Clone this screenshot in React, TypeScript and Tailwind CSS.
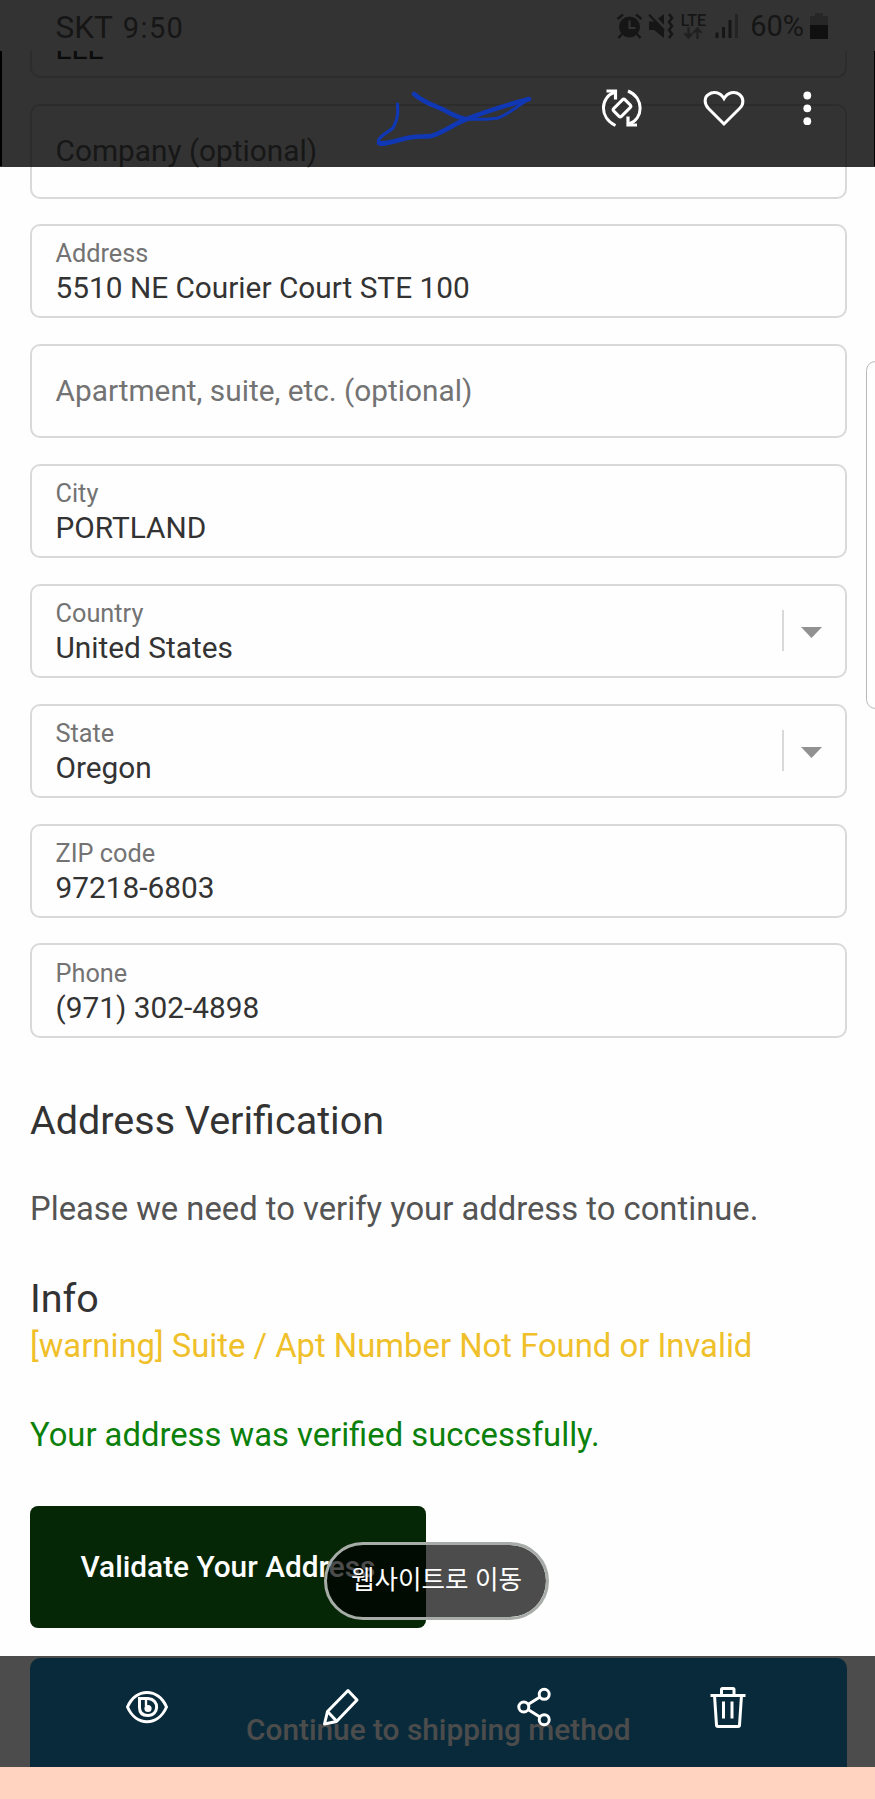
import type { ReactNode } from 'react';

type FieldProps = {
  label?: string;
  value?: string;
  placeholder?: string;
  select?: boolean;
};

const fields: FieldProps[] = [
  { placeholder: 'Company (optional)' },
  { label: 'Address', value: '5510 NE Courier Court STE 100' },
  { placeholder: 'Apartment, suite, etc. (optional)' },
  { label: 'City', value: 'PORTLAND' },
  { label: 'Country', value: 'United States', select: true },
  { label: 'State', value: 'Oregon', select: true },
  { label: 'ZIP code', value: '97218-6803' },
  { label: 'Phone', value: '(971) 302-4898' },
];

function Field({ label, value, placeholder, select }: FieldProps) {
  return (
    <div className="flex h-[94.4px] shrink-0 items-center rounded-[10px] border-2 border-[#d9d9d9] pl-[23.5px] pr-[23px]">
      <div className="flex-1">
        {placeholder ? (
          <div className="text-[29.8px] leading-[34px] text-[#737373]">{placeholder}</div>
        ) : (
          <>
            <div className="pt-[2.4px] text-[25.3px] leading-[32px] text-[#737373]">{label}</div>
            <div className="text-[29.8px] leading-[36px] text-[#333333]">{value}</div>
          </>
        )}
      </div>
      {select && (
        <div className="flex items-center gap-[17px]">
          <span className="h-[41px] w-[2px] bg-[#d9d9d9]" />
          <svg className="mt-[3px]" width="21" height="11" viewBox="0 0 21 11">
            <path d="M0 0h21L10.5 11z" fill="#919191" />
          </svg>
        </div>
      )}
    </div>
  );
}

function StatusBar() {
  return (
    <div className="flex h-[51px] shrink-0 items-center justify-between bg-white pl-[55.5px] pr-[47px] text-[#6e6e6e]">
      <div className="flex items-center pt-1 text-[31.5px] leading-[40px]">
        <span>SKT</span>
        <span className="ml-[10px] text-[29px] tracking-[1.4px]">9:50</span>
      </div>
      <div className="flex items-center pt-px">
        <svg width="27" height="26" viewBox="0 0 27 26" fill="none" stroke="currentColor" strokeWidth="2.6">
          <circle cx="13.5" cy="14" r="10.5" fill="currentColor" stroke="none" />
          <path d="M1.5 6 7 1.5M20 1.5 25.5 6M6 21l-3.5 4M21 21l3.5 4" />
          <path d="M13.5 7.5v7.5h6" stroke="#fff" strokeWidth="2" />
        </svg>
        <svg className="ml-[5px]" width="26" height="26" viewBox="0 0 26 26" fill="none" stroke="currentColor" strokeWidth="2.6">
          <path d="M1 8.5h5L16 1v24L6 17H1z" fill="currentColor" stroke="none" />
          <path d="M3 0l15 16" stroke="#fff" strokeWidth="2.6" />
          <path d="M1 1.5 16 18" strokeWidth="2.2" />
          <path d="M21 1l3 4-3 4 3 4-3 4 3 4-3 4" />
        </svg>
        <div className="ml-[7px] flex flex-col items-center">
          <span className="text-[16px] font-medium leading-[13px]">LTE</span>
          <svg width="20" height="12" viewBox="0 0 20 12" fill="none" stroke="#a0a0a0" strokeWidth="2.4">
            <path d="M5.5 0v10M1.5 6l4 4.5 4-4.5M14.5 12V2M10.5 6l4-4.5 4 4.5" />
          </svg>
        </div>
        <svg className="ml-[9px]" width="24" height="24" viewBox="0 0 24 24" stroke="currentColor" strokeWidth="3">
          <path d="M2 18.5V24M8.5 13v11M15 6v18" />
          <path d="M21.5 0v24" stroke="#b4b4b4" />
        </svg>
        <span className="ml-[11px] text-[29px] leading-[36px]">60%</span>
        <svg className="ml-[6px]" width="18" height="26" viewBox="0 0 18 26">
          <path d="M5 0h8v3h5v10H0V3h5z" fill="#c4c4c4" />
          <path d="M0 12h18v14H0z" fill="#505050" />
        </svg>
      </div>
    </div>
  );
}

function Icon({ children }: { children: ReactNode }) {
  return (
    <svg className="h-[42px] w-[42px]" viewBox="0 0 42 42" fill="none" stroke="#fff" strokeWidth="3">
      {children}
    </svg>
  );
}

function TopOverlay() {
  return (
    <div className="absolute inset-x-0 top-0 h-[167px] bg-black/80">
      <svg
        className="absolute left-[370px] top-[80px]"
        width="170"
        height="80"
        viewBox="0 0 170 80"
        fill="none"
        stroke="#1138b4"
        strokeLinecap="round"
        strokeLinejoin="round"
      >
        <path d="M27.5 24C28 32 28.5 38 23 48 17 53 9 56 8.500 61c0 4 3 3.500 7 3" strokeWidth="3.2" />
        <path d="M9 63c8 2 20-4 34-6 6-1 12 0 18-1C75 52 85 43 97 39c20-8 40-14 62-20" strokeWidth="4.6" />
        <path d="M44 14c9 8 18 11 28 15 8 4 13 8 22 9.5" strokeWidth="4.6" />
        <path d="M92 38.5c12 1 28 1 36-.5 11-4 18-11 31-19" strokeWidth="3" />
      </svg>
      <div className="flex items-center justify-end pr-[47px] pt-[87px]">
        <Icon>
          <path d="M14.5 38.5C-2 31-1 10 14 5M27 4C43.500 11 42.500 32 28 37" />
          <path d="M5.5 4h9v8.5M36 38h-9v-8.5" strokeWidth="3.2" />
          <rect x="13" y="15.5" width="16" height="11" rx="2" transform="rotate(-45 21 21)" />
        </Icon>
        <div className="ml-[60px]">
          <Icon>
            <path d="M21 37 5.5 21.5C1 17 1 10 5.5 7.5c5-4 12-2 15.5 4 3.5-6 10.5-8 15.5-4 4.500 3.500 4.500 10 0 14z" />
          </Icon>
        </div>
        <div className="ml-[41px]">
          <Icon>
            <g fill="#fff" stroke="none">
              <circle cx="21.3" cy="8.5" r="3.9" />
              <circle cx="21.3" cy="21.3" r="3.9" />
              <circle cx="21.3" cy="34.2" r="3.9" />
            </g>
          </Icon>
        </div>
      </div>
    </div>
  );
}

function BottomOverlay() {
  return (
    <div className="absolute inset-x-0 bottom-8 flex h-[111px] items-center justify-between bg-black/70 pb-[9px] pl-[126px] pr-[126px]">
      <Icon>
        <path d="M1.5 21C10 1.5 32 1.5 40.5 21 32 40.5 10 40.5 1.5 21z" />
        <path d="M13.5 12.5H22c12 1 11 17 0 17-6 0-8.5-3-8.5-8z" />
        <path d="M20 14v6" strokeWidth="2.4" />
        <circle cx="22" cy="22.5" r="3.6" fill="#fff" stroke="none" />
      </Icon>
      <Icon>
        <path d="M28 4.5 37 14 16.5 35.5 4.5 38 7.5 25.5z" strokeLinejoin="round" />
        <path d="M8 26 16 34.5" />
      </Icon>
      <Icon>
        <circle cx="31.2" cy="8.3" r="5" />
        <circle cx="10.8" cy="21" r="5" />
        <circle cx="31.2" cy="33.7" r="5" />
        <path d="m15 18.5 12-7.5M15 23.5 27 31" />
      </Icon>
      <Icon>
        <path d="M3.5 9.5h35M14.5 9V3.500q0-1 1-1H26q1 0 1 1V9M7.500 9.500l2 29.500q0 1.500 1.500 1.500h20q1.500 0 1.500-1.500l2-29.500M16.500 15.500v17M25 15.500v17" />
      </Icon>
    </div>
  );
}

export default function App() {
  return (
    <div className="relative flex h-[1799px] w-[875px] flex-col overflow-hidden bg-[#fefefe] font-['Roboto','Noto_Sans_CJK_KR',sans-serif]">
      <StatusBar />
      <main className="flex min-h-0 flex-1 flex-col overflow-hidden pl-[30px] pr-[28.5px]">
        {/* Last name field scrolled under the status bar */}
        <div className="flex h-[27px] shrink-0 flex-col justify-end overflow-hidden rounded-b-[10px] border-2 border-t-0 border-[#d9d9d9] pb-[15px] pl-[23.5px] text-[29.8px] leading-[24px] text-[#333333]">
          LLL
        </div>
        <div className="mt-[26.2px] flex flex-col gap-[25.5px]">
          {fields.map((field) => (
            <Field key={field.label ?? field.placeholder} {...field} />
          ))}
        </div>

        <h2 className="mt-[60.6px] text-[39.5px] leading-[46px] text-[#333333]">Address Verification</h2>
        <p className="mt-[45px] text-[32.77px] leading-[40px] text-[#545454]">Please we need to verify your address to continue.</p>
        <h2 className="mt-[46.4px] text-[39.5px] leading-[46px] text-[#333333]">Info</h2>
        <p className="mt-1 text-[32.8px] leading-[40px] text-[#efc02a]">[warning] Suite / Apt Number Not Found or Invalid</p>
        <p className="mt-[49px] text-[32.77px] leading-[40px] text-[#0b800b]">Your address was verified successfully.</p>

        <button className="mt-[51.5px] h-[121.5px] w-[396px] shrink-0 rounded-lg bg-[#052705] pl-[50.5px] pt-px text-left text-[29.8px] font-medium text-white">
          Validate Your Address
        </button>
        <button className="mt-[30px] h-[145px] shrink-0 rounded-[10px] bg-[#1b8cc3] text-[29.8px] font-medium text-white">
          Continue to shipping method
        </button>
      </main>
      <div className="h-8 shrink-0 bg-[#ffd3bf]" />

      {/* Edge panel handle */}
      <div className="absolute -right-[10px] top-[361px] h-[348px] w-[19px] rounded-xl border border-[#b9b9b9]" />
      <div className="absolute left-0 top-[51px] h-[115px] w-[2px] bg-black" />
      <div className="absolute right-0 top-[51px] h-[115px] w-[1px] bg-black" />

      <TopOverlay />
      <BottomOverlay />
      <div className="absolute left-[324px] top-[1542px] flex h-[78px] w-[225px] items-center justify-center rounded-full border-[3px] border-[#a8aca8] bg-black/70 bg-clip-padding pb-[2px] text-[25.6px] text-white">
        웹사이트로 이동
      </div>
    </div>
  );
}
